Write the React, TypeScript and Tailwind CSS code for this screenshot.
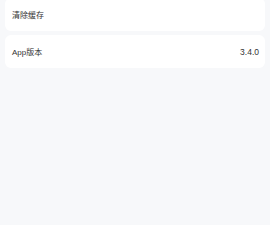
export default function App() {
  const font = { fontFamily: '"Liberation Sans", "Noto Sans CJK SC", sans-serif' };
  return (
    <div className="w-[270px] h-[225px] overflow-hidden bg-[#f7f8fa] text-[8px] text-[#333]" style={font}>
      <div className="flex flex-col gap-[4px] px-[5px] -mt-[2px]">
        <div className="h-[33px] bg-white rounded-[6px] flex items-center pt-[2px] px-[7px]">
          <span>清除缓存</span>
        </div>
        <div className="h-[33px] bg-white rounded-[6px] flex items-center justify-between pt-[2px] pl-[7px] pr-[6px]">
          <span>App版本</span>
          <span className="text-[8.5px]">3.4.0</span>
        </div>
      </div>
    </div>
  );
}
